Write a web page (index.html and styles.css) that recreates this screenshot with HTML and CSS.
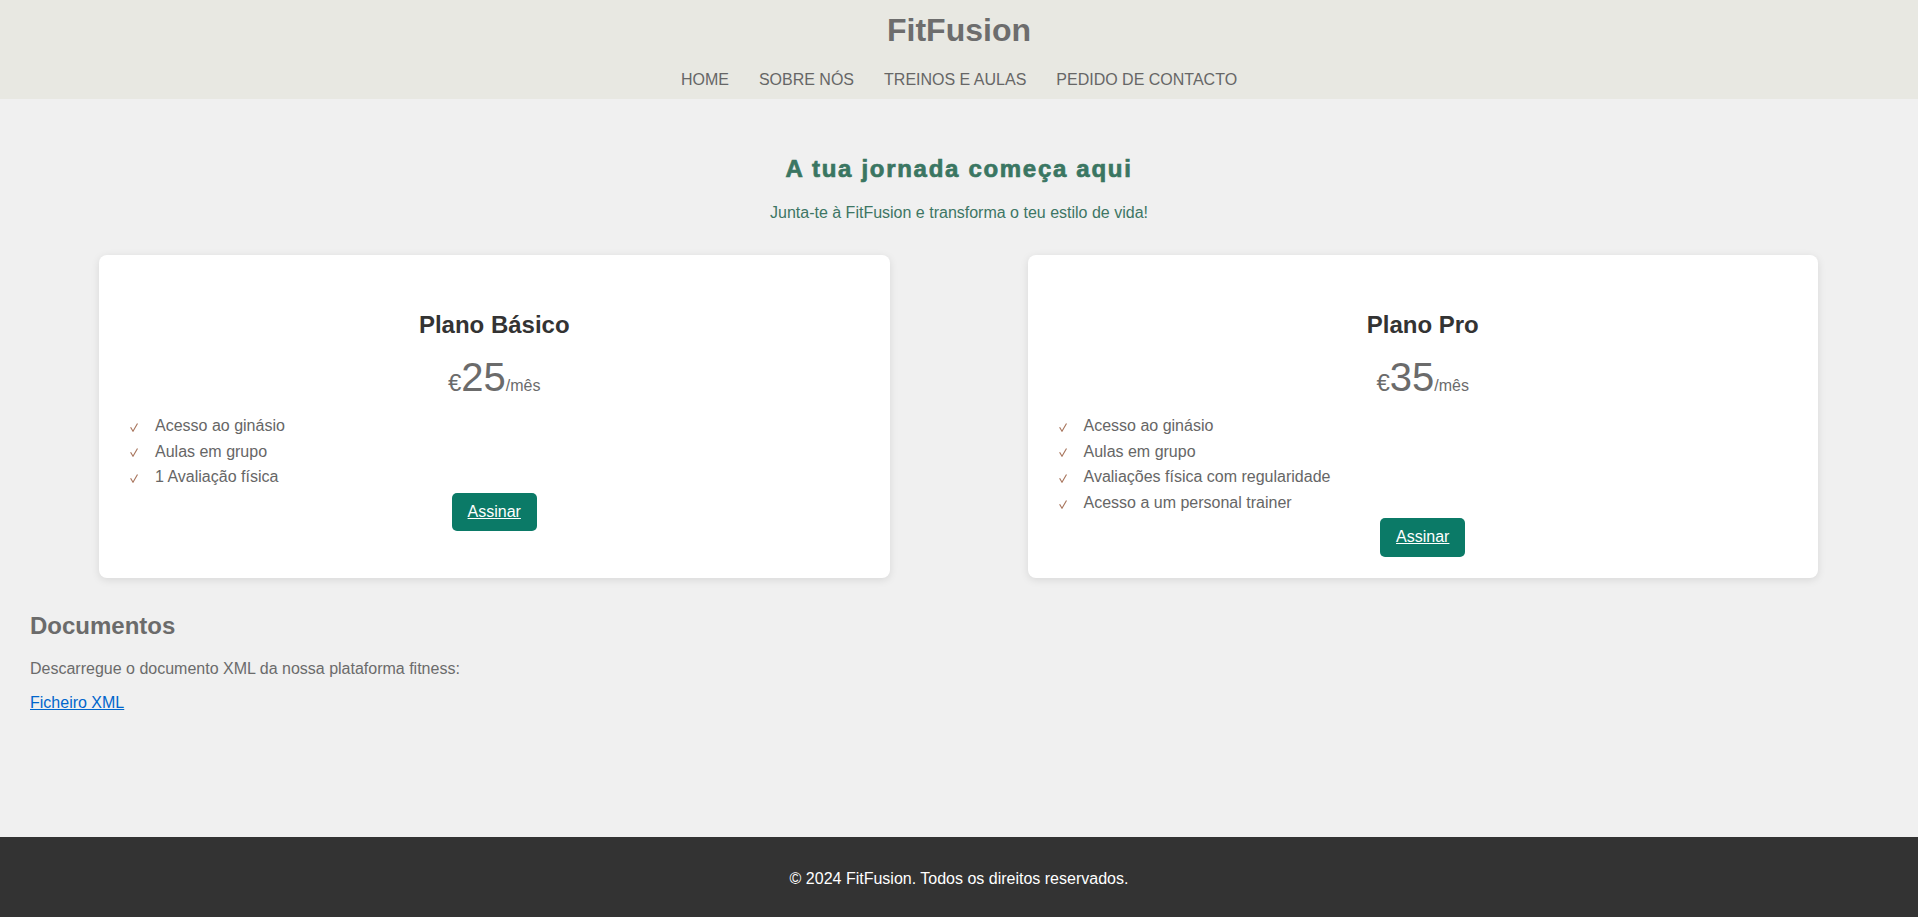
FILE: index.html
```html
<!DOCTYPE html>
<html lang="pt">
<head>
<meta charset="utf-8">
<title>FitFusion</title>
<link rel="stylesheet" href="styles.css">
</head>
<body>
<header class="site-header">
  <h1 class="logo">FitFusion</h1>
  <nav>
    <ul class="nav-list">
      <li><a href="#">HOME</a></li>
      <li><a href="#">SOBRE NÓS</a></li>
      <li><a href="#">TREINOS E AULAS</a></li>
      <li><a href="#">PEDIDO DE CONTACTO</a></li>
    </ul>
  </nav>
</header>
<main class="main">
  <section class="hero">
    <h2 class="hero-title">A tua jornada começa aqui</h2>
    <p class="hero-sub">Junta-te à FitFusion e transforma o teu estilo de vida!</p>
  </section>
  <section class="plans">
    <div class="plan-card">
      <h3 class="plan-name">Plano Básico</h3>
      <p class="price"><span class="cur">€</span>25<span class="per">/mês</span></p>
      <ul class="features">
        <li><svg class="chk" viewBox="0 0 8 9" width="8" height="9"><polyline points="0.6,4.2 3,8.2 7.5,0.5"/></svg>Acesso ao ginásio</li>
        <li><svg class="chk" viewBox="0 0 8 9" width="8" height="9"><polyline points="0.6,4.2 3,8.2 7.5,0.5"/></svg>Aulas em grupo</li>
        <li><svg class="chk" viewBox="0 0 8 9" width="8" height="9"><polyline points="0.6,4.2 3,8.2 7.5,0.5"/></svg>1 Avaliação física</li>
      </ul>
      <a class="btn" href="#">Assinar</a>
    </div>
    <div class="plan-card">
      <h3 class="plan-name">Plano Pro</h3>
      <p class="price"><span class="cur">€</span>35<span class="per">/mês</span></p>
      <ul class="features">
        <li><svg class="chk" viewBox="0 0 8 9" width="8" height="9"><polyline points="0.6,4.2 3,8.2 7.5,0.5"/></svg>Acesso ao ginásio</li>
        <li><svg class="chk" viewBox="0 0 8 9" width="8" height="9"><polyline points="0.6,4.2 3,8.2 7.5,0.5"/></svg>Aulas em grupo</li>
        <li><svg class="chk" viewBox="0 0 8 9" width="8" height="9"><polyline points="0.6,4.2 3,8.2 7.5,0.5"/></svg>Avaliações física com regularidade</li>
        <li><svg class="chk" viewBox="0 0 8 9" width="8" height="9"><polyline points="0.6,4.2 3,8.2 7.5,0.5"/></svg>Acesso a um personal trainer</li>
      </ul>
      <a class="btn" href="#">Assinar</a>
    </div>
  </section>
  <section class="docs">
    <h2 class="docs-title">Documentos</h2>
    <p class="docs-text">Descarregue o documento XML da nossa plataforma fitness:</p>
    <p class="docs-link"><a href="#">Ficheiro XML</a></p>
  </section>
</main>
<footer class="site-footer">
  <p>© 2024 FitFusion. Todos os direitos reservados.</p>
</footer>
</body>
</html>
```

FILE: styles.css
```css
html, body {
  margin: 0;
  padding: 0;
}

body {
  font-family: "Liberation Sans", Arial, sans-serif;
  font-size: 16px;
  background: #f0f0f0;
  display: flex;
  flex-direction: column;
  min-height: 100vh;
}

.site-header {
  background: #e8e8e2;
  text-align: center;
  padding: 12px 0 10px;
}

.logo {
  margin: 0 0 22px;
  font-size: 32px;
  font-weight: bold;
  color: #6d6d6d;
  line-height: 37px;
}

.nav-list {
  list-style: none;
  margin: 0;
  padding: 0;
  display: flex;
  justify-content: center;
}

.nav-list a {
  display: block;
  margin: 0 15px;
  color: #666;
  text-decoration: none;
  font-size: 16px;
  line-height: 18px;
}

.main {
  flex: 1;
}

.hero {
  text-align: center;
  padding-top: 56px;
}

.hero-title {
  margin: 0;
  font-size: 24px;
  line-height: 28px;
  font-weight: bold;
  letter-spacing: 1.7px;
  color: #3a7662;
  -webkit-text-stroke: 0.7px #3a7662;
}

.hero-sub {
  margin: 21px 0 0;
  color: #3d7664;
  font-size: 16px;
}

.plans {
  display: flex;
  gap: 138px;
  padding: 33px 100px 0 99px;
}

.plan-card {
  flex: 1;
  background: #fff;
  border-radius: 8px;
  box-shadow: 0 2px 8px rgba(0, 0, 0, 0.1);
  padding: 20px 20px 21px;
  display: flex;
  flex-direction: column;
  align-items: center;
}

.plan-name {
  margin: 36px 0 0;
  font-size: 24px;
  line-height: 28px;
  color: #333;
}

.price {
  margin: 15px 0 0;
  font-size: 40px;
  line-height: 46px;
  color: #6b6b6b;
}

.cur {
  font-size: 24px;
  line-height: 1;
}

.per {
  font-size: 16px;
  line-height: 1;
}

.features {
  align-self: stretch;
  list-style: none;
  margin: 13px 0 0;
  padding: 0;
}

.features li {
  display: flex;
  align-items: center;
  font-size: 16px;
  line-height: 25.6px;
  color: #666;
}

.chk {
  flex-shrink: 0;
  margin: 3px 17px 0 11px;
  fill: none;
  stroke: #a8755d;
  stroke-width: 1.15;
}

.btn {
  margin-top: 3px;
  padding: 10px 16px;
  background: #0b7a67;
  color: #fff;
  text-decoration: underline;
  border-radius: 5px;
  font-size: 16px;
  line-height: 18.4px;
}

.docs {
  padding: 0 30px;
}

.docs-title {
  margin: 34px 0 20px;
  font-size: 24px;
  color: #6b6b6b;
}

.docs-text {
  margin: 0 0 16px;
  color: #6b6b6b;
}

.docs-link {
  margin: 0 0 16px;
}

.docs-link a {
  color: #0066cc;
}

.site-footer {
  background: #333;
  color: #fff;
  text-align: center;
  padding: 17px 0 13px;
}

.site-footer p {
  margin: 16px 0;
}
```
